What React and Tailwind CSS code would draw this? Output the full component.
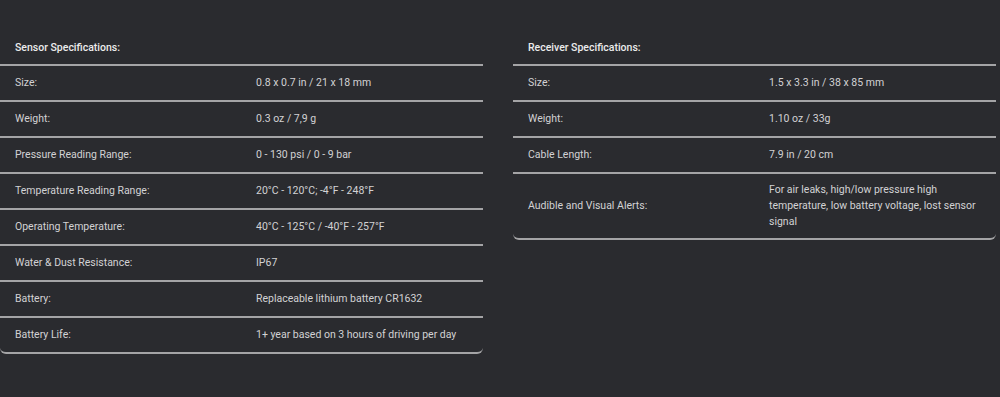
import React from "react";

const sensor = [
  ["Size:", "0.8 x 0.7 in / 21 x 18 mm"],
  ["Weight:", "0.3 oz / 7,9 g"],
  ["Pressure Reading Range:", "0 - 130 psi / 0 - 9 bar"],
  ["Temperature Reading Range:", "20°C - 120°C; -4°F - 248°F"],
  ["Operating Temperature:", "40°C - 125°C / -40°F - 257°F"],
  ["Water & Dust Resistance:", "IP67"],
  ["Battery:", "Replaceable lithium battery CR1632"],
  ["Battery Life:", "1+ year based on 3 hours of driving per day"],
];

const receiver = [
  ["Size:", "1.5 x 3.3 in / 38 x 85 mm"],
  ["Weight:", "1.10 oz / 33g"],
  ["Cable Length:", "7.9 in / 20 cm"],
  [
    "Audible and Visual Alerts:",
    "For air leaks, high/low pressure high temperature, low battery voltage, lost sensor signal",
  ],
];

function Table({ title, rows }) {
  return (
    <div className="flex flex-col">
      <div className="h-[34px] flex items-center pl-[15px] border-b-2 border-[#a4a4a6] text-[#ececec] font-medium">
        {title}
      </div>
      {rows.map(([k, v], i) => (
        <div
          key={k}
          className={
            "grid grid-cols-[256px_1fr] items-center border-b-2 border-[#a4a4a6] text-[#d2d2d4] " +
            (v.length > 60 ? "py-[8px] min-h-[36px] " : "h-[36px] ") +
            (i === rows.length - 1 ? "rounded-b-[6px]" : "")
          }
        >
          <div className="pl-[15px]">{k}</div>
          <div className={v.length > 60 ? "pr-[18px] leading-[16px]" : ""}>{v}</div>
        </div>
      ))}
    </div>
  );
}

export default function App() {
  return (
    <div
      className="w-[1000px] h-[397px] bg-[#2a2b2f] pt-[32px] text-[10.5px]"
      style={{ fontFamily: "Roboto, 'Liberation Sans', sans-serif" }}
    >
      <div className="grid grid-cols-[483px_483px] gap-[30px]">
        <Table title="Sensor Specifications:" rows={sensor} />
        <Table title="Receiver Specifications:" rows={receiver} />
      </div>
    </div>
  );
}
